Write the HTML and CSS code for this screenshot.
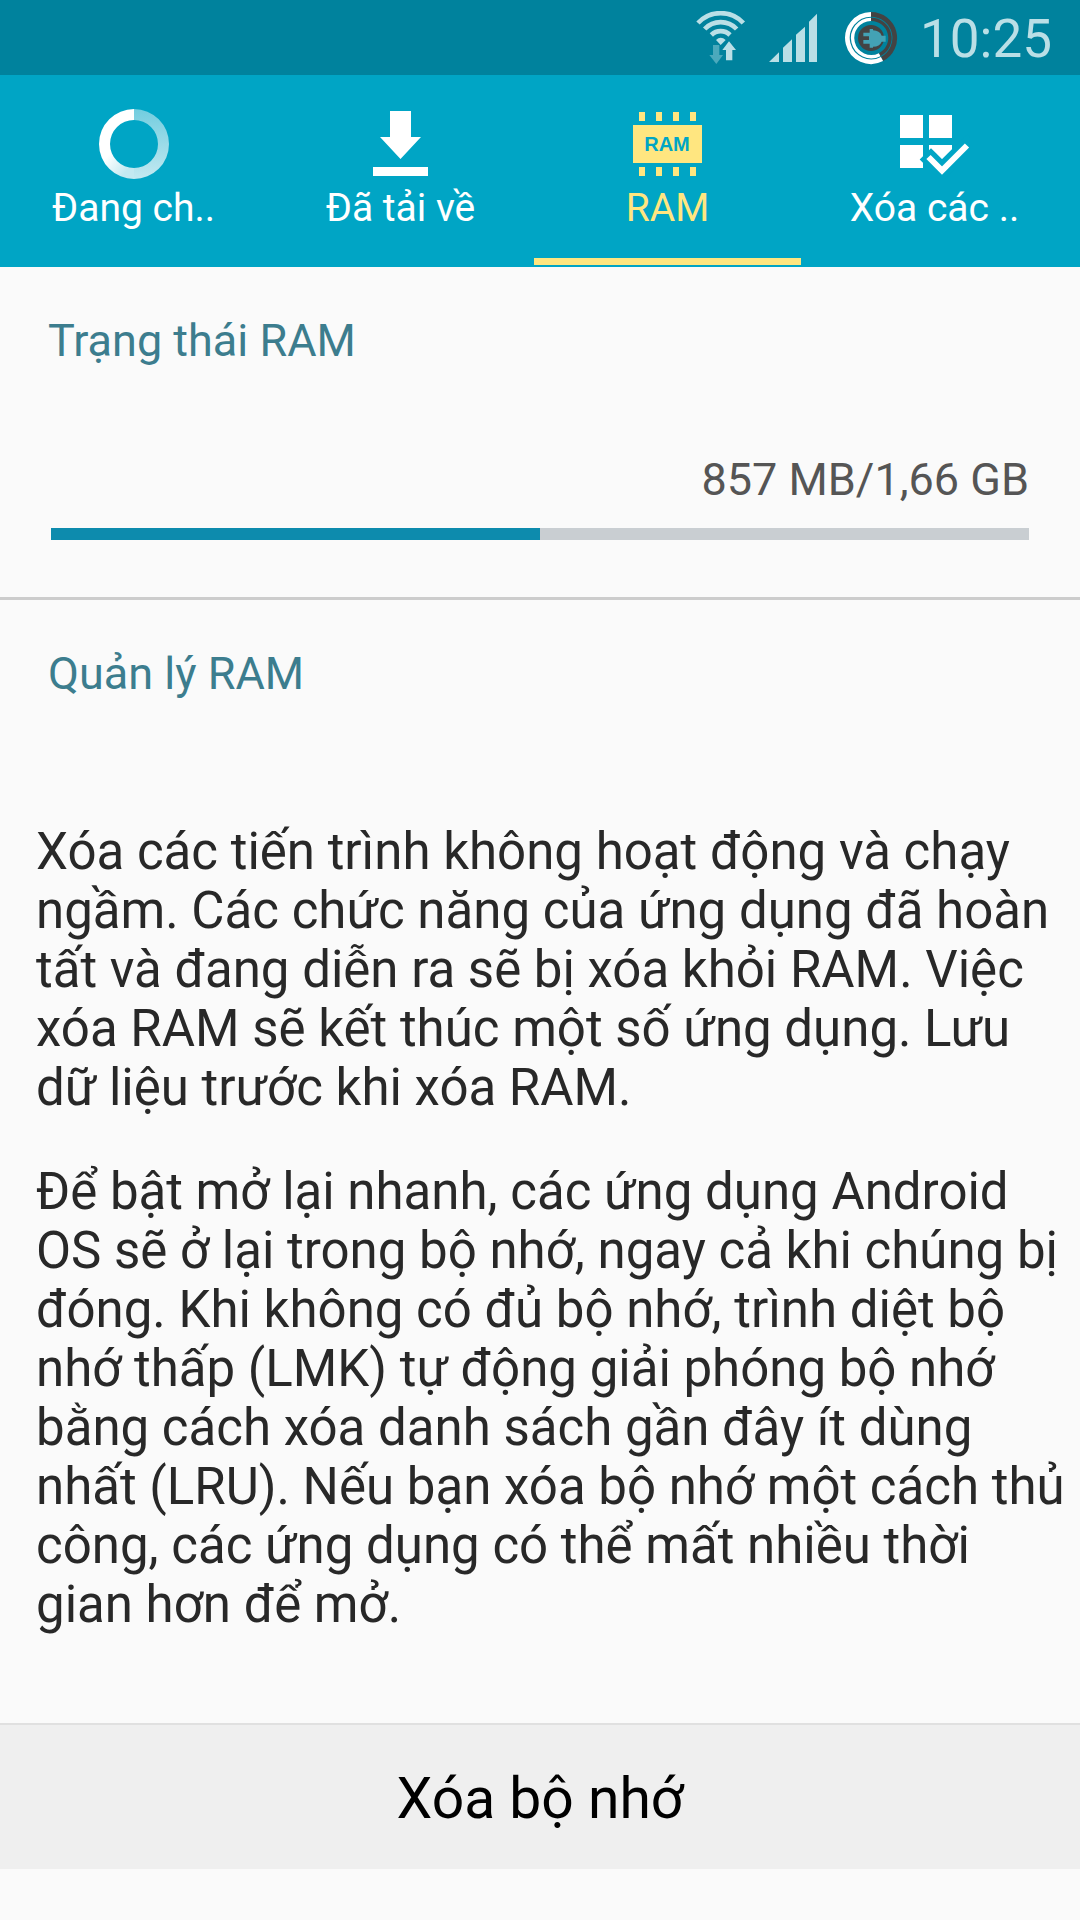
FILE: index.html
```html
<!DOCTYPE html>
<html lang="vi">
<head>
    <meta charset="UTF-8">
    <meta name="viewport" content="width=device-width, initial-scale=1.0">
    <title>RAM</title>
    <link rel="stylesheet" href="styles.css">
</head>
<body>
    <header class="status-bar">
        <svg width="52" height="54" viewBox="45 30 156 162" aria-hidden="true">
            <g fill="none" stroke="#badfe6" stroke-width="14">
                <path d="M57 66A93 93 0 0 1 193 66"/>
                <path d="M77 84A66 66 0 0 1 173 84"/>
                <path d="M97 102A40 40 0 0 1 153 102"/>
            </g>
            <path d="M111 117Q125 104 140 117L125 132Z" fill="#badfe6"/>
            <path d="M102 132H121V162H132L112 189L91 162H102Z" fill="#4ba9bc"/>
            <path d="M150 121L171 147H160V178H141V147H130Z" fill="#badfe6" stroke="#00829d" stroke-width="6" paint-order="stroke"/>
        </svg>
        <svg width="54" height="54" viewBox="267 30 162 162" aria-hidden="true">
            <path d="M270 183L300 154V183ZM312 183V140L339 115V183ZM351 183V101L378 77V183ZM390 183V62L414 38V183Z" fill="#badfe6"/>
        </svg>
        <svg width="54" height="54" viewBox="495 30 162 162" aria-hidden="true">
            <g fill="none" stroke="#434343">
                <path d="M576 40A71 71 0 0 1 609 174" stroke-width="14"/>
                <path d="M576 55A56 56 0 0 1 602 161" stroke-width="10"/>
            </g>
            <g fill="none" stroke="#ffffff">
                <path d="M576 40A71 71 0 1 0 609 174" stroke-width="14"/>
                <path d="M576 55A56 56 0 1 0 602 161" stroke-width="10"/>
            </g>
            <circle cx="576" cy="111" r="39" fill="#434343"/>
            <path d="M572 84H582V88Q602 89 608 104H620V122H608Q602 137 582 137V140H572V128H553V117H570V106H553V95H572Z" fill="#43a2b5"/>
        </svg>
        <span class="clock">10:25</span>
    </header>

    <nav class="tabs">
        <a href="#running" class="tab">
            <svg width="70" height="70" viewBox="0 0 70 70" aria-hidden="true">
                <defs>
                    <linearGradient id="fadeRight" x1="0" y1="0" x2="0" y2="1">
                        <stop offset="0" stop-color="#72cddf"/>
                        <stop offset="1" stop-color="#c3e9f1"/>
                    </linearGradient>
                    <linearGradient id="fadeLeft" x1="0" y1="0" x2="0.6" y2="1">
                        <stop offset="0.6" stop-color="#ffffff"/>
                        <stop offset="1" stop-color="#c3e9f1"/>
                    </linearGradient>
                </defs>
                <path d="M35 0A35 35 0 0 1 35 70V59A24 24 0 0 0 35 11Z" fill="url(#fadeRight)"/>
                <path d="M35 0A35 35 0 0 0 35 70V59A24 24 0 0 1 35 11Z" fill="url(#fadeLeft)"/>
            </svg>
            <span>Đang ch..</span>
        </a>
        <a href="#downloaded" class="tab">
            <svg width="70" height="70" viewBox="0 0 70 70" aria-hidden="true">
                <path d="M24 2H45V28H55L34.500 50L14 28H24ZM7 58H62V67H7Z" fill="#ffffff"/>
            </svg>
            <span>Đã tải về</span>
        </a>
        <a href="#ram" class="tab active">
            <svg width="70" height="70" viewBox="0 0 70 70" aria-hidden="true">
                <path d="M0 16H69V54H0ZM6 3H12V12H6ZM23 3H29V12H23ZM40 3H46V12H40ZM57 3H63V12H57ZM6 58H12V67H6ZM23 58H29V67H23ZM40 58H46V67H40ZM57 58H63V67H57Z" fill="#ffe680"/>
                <text x="34" y="42" class="chip-text">RAM</text>
            </svg>
            <span>RAM</span>
        </a>
        <a href="#clear" class="tab">
            <svg width="70" height="70" viewBox="0 0 70 70" aria-hidden="true">
                <path d="M0 6H23V29H0ZM29 6H52V29H29ZM0 36H23V59H0ZM29 36H52V59H29Z" fill="#ffffff"/>
                <path d="M31 50.500L42 61.500L67 36.500" fill="none" stroke="#00a5c5" stroke-width="16" stroke-linecap="square"/>
                <path d="M28.500 48L42 61.500L67 36.500" fill="none" stroke="#ffffff" stroke-width="6"/>
            </svg>
            <span>Xóa các ..</span>
        </a>
    </nav>

    <main>
        <section class="ram-status">
            <h2>Trạng thái RAM</h2>
            <p class="usage">857 MB/1,66 GB</p>
            <div class="bar" role="progressbar" aria-label="RAM" aria-valuenow="50" aria-valuemin="0" aria-valuemax="100">
                <div class="bar-fill" style="width: 50%"></div>
            </div>
        </section>

        <section class="ram-manager">
            <h2>Quản lý RAM</h2>
            <div class="description">
                <p>Xóa các tiến trình không hoạt động và chạy ngầm. Các chức năng của ứng dụng đã hoàn tất và đang diễn ra sẽ bị xóa khỏi RAM. Việc xóa RAM sẽ kết thúc một số ứng dụng. Lưu dữ liệu trước khi xóa RAM.</p>
                <p>Để bật mở lại nhanh, các ứng dụng Android OS sẽ ở lại trong bộ nhớ, ngay cả khi chúng bị đóng. Khi không có đủ bộ nhớ, trình diệt bộ nhớ thấp (LMK) tự động giải phóng bộ nhớ bằng cách xóa danh sách gần đây ít dùng nhất (LRU). Nếu bạn xóa bộ nhớ một cách thủ công, các ứng dụng có thể mất nhiều thời gian hơn để mở.</p>
            </div>
        </section>

        <button type="button" class="clear-button">Xóa bộ nhớ</button>
    </main>
</body>
</html>
```

FILE: styles.css
```css
* {
    box-sizing: border-box;
}
body {
    margin: 0;
    font-family: Roboto, sans-serif;
    background-color: #fafafa;
    color: #282828;
}
h2, p {
    margin: 0;
    font-weight: normal;
}
.status-bar {
    display: flex;
    justify-content: flex-end;
    align-items: center;
    gap: 22px;
    height: 75px;
    padding-right: 28px;
    background-color: #00829d;
}
.clock {
    padding-top: 2px;
    font-size: 53px;
    line-height: 64px;
    color: #badfe6;
}
.tabs {
    display: flex;
    height: 192px;
    padding: 0 12px 2px 0;
    background-color: #00a5c5;
}
.tab {
    flex: 1;
    display: flex;
    flex-direction: column;
    align-items: center;
    gap: 6px;
    padding-top: 34px;
    border-bottom: 7px solid transparent;
    font-size: 39px;
    line-height: 46px;
    color: #ffffff;
    text-decoration: none;
}
.tab.active {
    color: #ffe680;
    border-bottom-color: #ffe680;
}
.chip-text {
    font: bold 20px "Liberation Sans", sans-serif;
    fill: #00a5c5;
    text-anchor: middle;
}
h2 {
    font-size: 45px;
    line-height: 54px;
    color: #3c7d8e;
}
.ram-status {
    padding: 47px 51px 57px 48px;
    border-bottom: 3px solid #cccccc;
}
.usage {
    margin-top: 85px;
    font-size: 45px;
    line-height: 54px;
    text-align: right;
    color: #555555;
}
.bar {
    margin: 21px 0 0 3px;
    height: 12px;
    background-color: #c9ced2;
}
.bar-fill {
    height: 100%;
    background-color: #0d8bad;
}
.ram-manager {
    padding: 47px 8px 89px 36px;
}
.ram-manager h2 {
    padding-left: 12px;
}
.description {
    display: flex;
    flex-direction: column;
    gap: 45px;
    margin-top: 121px;
    font-size: 51px;
    line-height: 59px;
}
.clear-button {
    display: block;
    width: 100%;
    padding: 41px 0 37px;
    border: none;
    border-top: 2px solid #e0e0e0;
    background-color: #efefef;
    font-family: Roboto, sans-serif;
    font-size: 57px;
    line-height: 66px;
    color: #000000;
}
```
